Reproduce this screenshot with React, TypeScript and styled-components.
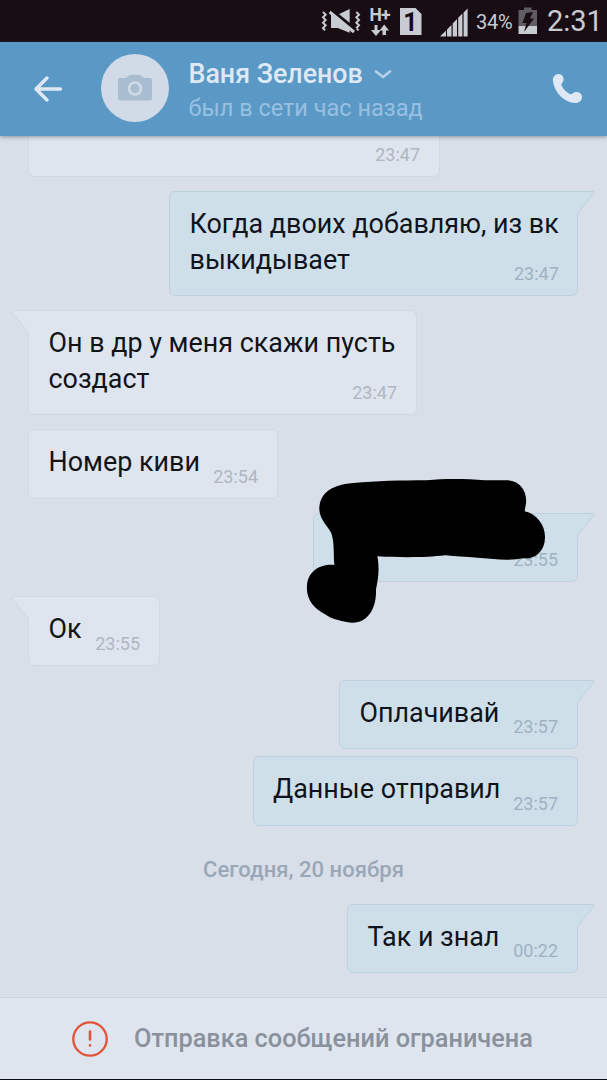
import React from 'react';
import styled, { createGlobalStyle } from 'styled-components';

const GlobalStyle = createGlobalStyle`
  * {
    box-sizing: border-box;
  }

  body {
    margin: 0;
    background: #d9dfe9;
    font-family: Roboto, 'Noto Sans', sans-serif;
  }
`

const Screen = styled.div`
  display: flex;
  flex-direction: column;
  width: 607px;
  height: 1080px;
  overflow: hidden;
  background: #d9dfe9;
  border-bottom: 1px solid #0c0c10;
`

const StatusBar = styled.div`
  display: flex;
  align-items: flex-start;
  flex: none;
  height: 42px;
  padding-left: 321px;
  background: #190d14;
  color: #c9cbd3;
`

const StatusIcon = styled.svg<{ $gap?: number }>`
  flex: none;
  margin-left: ${(props) => props.$gap || 0}px;
`

const Battery = styled.span`
  width: 36px;
  margin-left: 7px;
  font-size: 20px;
  line-height: 44px;
  letter-spacing: -0.2px;
  white-space: nowrap;
`

const Clock = styled.span`
  margin-left: 9px;
  font-size: 29px;
  line-height: 43px;
  white-space: nowrap;
`

const Header = styled.header`
  position: relative;
  z-index: 2;
  display: flex;
  align-items: flex-start;
  flex: none;
  height: 94px;
  background: #5a98c5;
  box-shadow: 0 1px 4px rgba(70, 85, 105, 0.55);
`

const BackIcon = styled.svg`
  margin: 32px 0 0 32px;
`

const Avatar = styled.div`
  display: flex;
  align-items: center;
  justify-content: center;
  width: 68px;
  height: 68px;
  margin: 12px 0 0 37px;
  border-radius: 50%;
  background: #d0dbe7;
`

const Contact = styled.div`
  flex: 1;
  padding: 16px 0 0 19.5px;
`

const Name = styled.div`
  display: flex;
  align-items: center;
  font-size: 26.8px;
  font-weight: 500;
  line-height: 32px;
  color: #dfe9f5;

  svg {
    margin-left: 11px;
  }
`

const LastSeen = styled.div`
  font-size: 23.5px;
  line-height: 36px;
  color: #98c0e2;
`

const PhoneIcon = styled.svg`
  margin: 31px 24px 0 0;
`

const Chat = styled.main`
  display: flex;
  flex-direction: column;
  flex: 1;
  gap: 14px;
  padding: 0 28px;
`

const Bubble = styled.div<{ $out?: boolean, $width: number, $tight?: boolean }>`
  position: relative;
  display: grid;
  flex: none;
  align-self: ${(props) => props.$out ? 'flex-end' : 'flex-start'};
  width: ${(props) => props.$width}px;
  min-height: 69.5px;
  margin-top: ${(props) => props.$tight ? -7 : 0}px;
  padding: 15px 19px 17px 19.5px;
  border: 1px solid ${(props) => props.$out ? '#bdd1df' : '#d0d8e1'};
  border-radius: 6px;
  background: ${(props) => props.$out ? '#cfdfea' : '#dee5ee'};
  color: ${(props) => props.$out ? '#0f141c' : '#121317'};
`

const OutBubble = styled(Bubble)`
  margin-right: 1px;
`

const CutBubble = styled(Bubble)`
  height: 41px;
  min-height: 0;
  padding: 0 19px 11px;
  border-top: 0;
  border-radius: 0 0 6px 6px;
`

const Text = styled.div`
  grid-area: 1 / 1;
  display: flex;
  flex-direction: column;
  align-items: flex-start;
  font-size: 26.9px;
  line-height: 35.5px;
  white-space: nowrap;
`

const Time = styled.span<{ $out?: boolean }>`
  grid-area: 1 / 1;
  align-self: end;
  justify-self: end;
  margin-bottom: -6px;
  font-size: 18px;
  line-height: 20px;
  color: ${(props) => props.$out ? '#9eb2c3' : '#afb6c2'};
`

const CutTime = styled(Time)`
  margin-bottom: 0;
`

const TailShape = styled.svg<{ $out?: boolean }>`
  position: absolute;
  top: -1px;
  ${(props) => props.$out ? 'right: -18px;' : 'left: -18px; transform: scaleX(-1);'}
`

const Scribble = styled.svg`
  position: absolute;
  top: -43.5px;
  left: -24px;
  z-index: 1;
`

const DateLabel = styled.div`
  margin: 15px 0 7px;
  font-size: 22.1px;
  font-weight: 500;
  line-height: 28px;
  text-align: center;
  color: #99a7b7;
`

const Restriction = styled.footer`
  display: flex;
  align-items: center;
  flex: none;
  height: 82px;
  padding-left: 71px;
  border-top: 1px solid #cdd5df;
  background: #dee5ee;
  font-size: 25.3px;
  font-weight: 500;
  color: #8a919d;

  span {
    margin-left: 25px;
    white-space: nowrap;
  }
`

interface TailProps {
  out?: boolean,
}

const Tail: React.FC<TailProps> = ({ out }) => (
  <TailShape $out={out} width="26" height="30" viewBox="0 0 26 30">
    <path d="M0 .5H24.5Q25.8 .8 25 2L10.5 20Q8.5 22.5 8.5 26V30H0Z" fill={out ? '#cfdfea' : '#dee5ee'}/>
    <path d="M0 .5H24.5Q25.8 .8 25 2L10.5 20Q8.5 22.5 8.5 26V30" fill="none" stroke={out ? '#bdd1df' : '#d0d8e1'}/>
  </TailShape>
)

interface MessageProps {
  out?: boolean,
  tail?: boolean,
  tight?: boolean,
  width: number,
  lines?: string[],
  time: string,
  children?: React.ReactNode,
}

const Message: React.FC<MessageProps> = ({ out, tail, tight, width, lines = [], time, children }) => {
  const Box = out ? OutBubble : Bubble;
  return (
    <Box $out={out} $width={width} $tight={tight}>
      {tail && <Tail out={out}/>}
      <Text>
        {lines.map((line) => <span key={line}>{line}</span>)}
      </Text>
      <Time $out={out}>{time}</Time>
      {children}
    </Box>
  )
}

const App: React.FC = () => {
  return (
    <Screen>
      <GlobalStyle/>
      <StatusBar>
        {/* muted, vibration */}
        <StatusIcon width="40" height="42" viewBox="0 0 120 126">
          <g fill="none" stroke="#c9cbd3" strokeWidth="6">
            <path d="M6 36L14 44L6 52L14 60L6 68L14 76L6 84L12 91"/>
            <path d="M106 36L114 44L106 52L114 60L106 68L114 76L106 84L112 91"/>
          </g>
          <path d="M30 44H50L86 27V98L50 84H30Z" fill="#c9cbd3"/>
          <path d="M27 30L103 92" stroke="#190d14" strokeWidth="15"/>
          <path d="M26 36L99 96" stroke="#c9cbd3" strokeWidth="9"/>
        </StatusIcon>
        {/* mobile data */}
        <StatusIcon $gap={8} width="24" height="42" viewBox="0 0 24 42">
          <text x="0.5" y="20.5" fontSize="17.5" fontWeight="700" fill="#c9cbd3" textLength="21">H+</text>
          <path d="M5.5 25H8.5V30H12L7 36L2 30H5.5ZM13.5 35V30.5H10.5L15.2 24.5L20 30.5H17V35Z" fill="#c9cbd3"/>
        </StatusIcon>
        <StatusIcon $gap={7} width="22" height="42" viewBox="0 0 22 42">
          <path d="M0 8H15.5L21.5 14V35H0Z" fill="#c9cbd3"/>
          <text x="10.5" y="31" fontSize="25" fontWeight="700" textAnchor="middle" fill="#190d14">1</text>
        </StatusIcon>
        {/* signal */}
        <StatusIcon $gap={18} width="29" height="42" viewBox="0 0 29 42">
          <path d="M0 36.5L6 30.5V36.5ZM7 29.5L11.5 25V36.5H7ZM12.7 23.5L17 19V36.5H12.7ZM18.2 17.8L22.4 13.5V36.5H18.2ZM23.6 12.5L27.6 8.5V36.5H23.6Z" fill="#c9cbd3"/>
        </StatusIcon>
        <Battery>34%</Battery>
        <StatusIcon $gap={6} width="20" height="42" viewBox="0 0 20 42">
          <path d="M6 7.5H13.5V10H19V26H0.5V10H6Z" fill="#5f5c63"/>
          <path d="M0.5 26H19V34H0.5Z" fill="#c9cbd3"/>
          <path d="M8 13L15 12L12 18.5H16L6 32L8.5 23H4.5Z" fill="#190d14"/>
        </StatusIcon>
        <Clock>2:31</Clock>
      </StatusBar>

      <Header>
        <BackIcon width="32" height="30" viewBox="0 0 32 30" fill="none" stroke="#dfe9f5" strokeWidth="3.4" strokeLinecap="round" strokeLinejoin="round">
          <path d="M15 4L4 15L15 26M4 15H28.5"/>
        </BackIcon>
        <Avatar>
          <svg width="34" height="28" viewBox="0 0 34 28">
            <path d="M2 4H8L11 1.5Q12 .8 13 .8H21Q22 .8 23 1.5L26 4H32Q34 4 34 6V24.5Q34 26.5 32 26.5H2Q0 26.5 0 24.5V6Q0 4 2 4Z" fill="#a9bdd0"/>
            <circle cx="17" cy="14.5" r="6" fill="none" stroke="#d0dbe7" strokeWidth="2.7"/>
          </svg>
        </Avatar>
        <Contact>
          <Name>
            Ваня Зеленов
            <svg width="18" height="12" viewBox="0 0 18 12" fill="none" stroke="#b4d0e9" strokeWidth="2.8" strokeLinecap="round" strokeLinejoin="round">
              <path d="M2 3.5L9 9L16 3.5"/>
            </svg>
          </Name>
          <LastSeen>был в сети час назад</LastSeen>
        </Contact>
        <PhoneIcon width="31" height="31" viewBox="0 0 31 31">
          <path d="M1 8C.5 4 3 1 6.500 1C10 1 12 4 11.500 7C11.200 9.500 8.800 10.500 9.500 12.500C11 16 14.500 19.500 18 21.200C20.200 22 20.800 19.500 23.500 19C27 18.400 30 20.800 30 24C30 27.500 27 30 23.500 30C12 29.500 2.500 19.500 1 8Z" fill="#dfe9f5"/>
        </PhoneIcon>
      </Header>

      <Chat>
        <CutBubble $width={412}>
          <CutTime>23:47</CutTime>
        </CutBubble>
        <Message out tail width={409} lines={['Когда двоих добавляю, из вк', 'выкидывает']} time="23:47"/>
        <Message tail width={389} lines={['Он в др у меня скажи пусть', 'создаст']} time="23:47"/>
        <Message width={250} lines={['Номер киви']} time="23:54"/>
        <Message out tail width={265} time="23:55">
          <Scribble width="317" height="160" viewBox="0 0 951 480">
            <path d="M88 120C88 75 115 45 190 39C260 33 330 31 410 31C470 25 530 27 585 31H650C690 31 712 65 708 100L704 124C740 132 766 165 765 203C764 245 735 268 700 265C675 270 640 271 610 267C560 262 510 261 465 256C410 263 330 263 262 259C270 300 263 335 258 358C260 420 230 460 185 458C155 454 125 448 104 432C70 415 48 385 51 348C52 310 85 280 133 285C130 255 134 220 124 190C115 170 90 150 88 120Z" fill="#000"/>
          </Scribble>
        </Message>
        <Message tail width={132} lines={['Ок']} time="23:55"/>
        <Message out tail width={239} lines={['Оплачивай']} time="23:57"/>
        <Message out tight width={325.5} lines={['Данные отправил']} time="23:57"/>
        <DateLabel>Сегодня, 20 ноября</DateLabel>
        <Message out tail width={231} lines={['Так и знал']} time="00:22"/>
      </Chat>

      <Restriction>
        <svg width="38" height="38" viewBox="0 0 38 38" fill="none" stroke="#e2533a" strokeLinecap="round">
          <circle cx="19" cy="19" r="16.7" strokeWidth="2.3"/>
          <path d="M19 11.5V19.5M19 25.3V25.5" strokeWidth="2.6"/>
        </svg>
        <span>Отправка сообщений ограничена</span>
      </Restriction>
    </Screen>
  )
}

export default App;
